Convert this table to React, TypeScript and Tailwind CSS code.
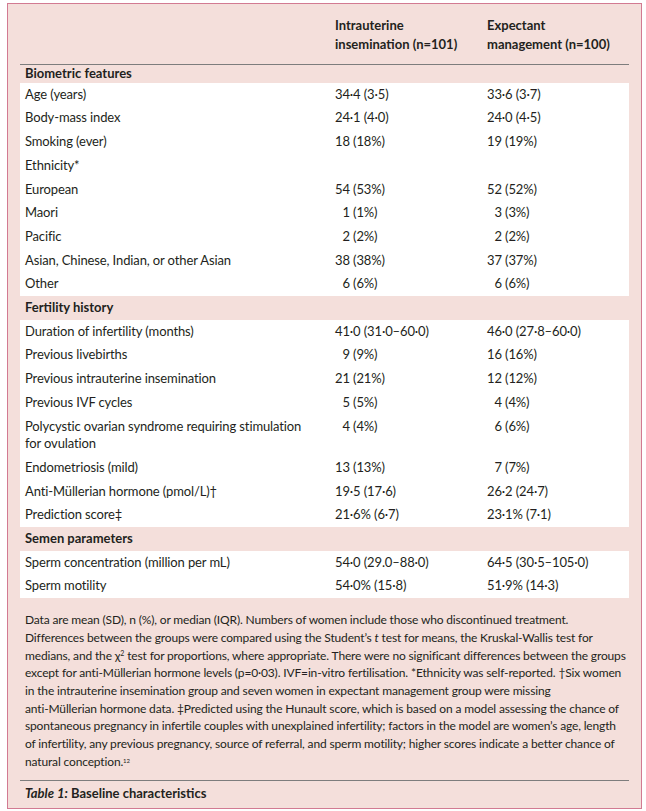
import React from "react";

const FS = "\u2007";

type R = [React.ReactNode, string, string];

const bio: R[] = [
  ["Age (years)", "34·4 (3·5)", "33·6 (3·7)"],
  ["Body-mass index", "24·1 (4·0)", "24·0 (4·5)"],
  ["Smoking (ever)", "18 (18%)", "19 (19%)"],
  ["Ethnicity*", "", ""],
  ["European", "54 (53%)", "52 (52%)"],
  ["Maori", FS + "1 (1%)", FS + "3 (3%)"],
  ["Pacific", FS + "2 (2%)", FS + "2 (2%)"],
  ["Asian, Chinese, Indian, or other Asian", "38 (38%)", "37 (37%)"],
  ["Other", FS + "6 (6%)", FS + "6 (6%)"],
];

const fert: R[] = [
  ["Duration of infertility (months)", "41·0 (31·0–60·0)", "46·0 (27·8–60·0)"],
  ["Previous livebirths", FS + "9 (9%)", "16 (16%)"],
  ["Previous intrauterine insemination", "21 (21%)", "12 (12%)"],
  ["Previous IVF cycles", FS + "5 (5%)", FS + "4 (4%)"],
  [
    <>
      Polycystic ovarian syndrome requiring stimulation
      <br />
      for ovulation
    </>,
    FS + "4 (4%)",
    FS + "6 (6%)",
  ],
  ["Endometriosis (mild)", "13 (13%)", FS + "7 (7%)"],
  ["Anti-Müllerian hormone (pmol/L)†", "19·5 (17·6)", "26·2 (24·7)"],
  ["Prediction score‡", "21·6% (6·7)", "23·1% (7·1)"],
];

const semen: R[] = [
  ["Sperm concentration (million per mL)", "54·0 (29.0–88·0)", "64·5 (30·5–105·0)"],
  ["Sperm motility", "54·0% (15·8)", "51·9% (14·3)"],
];

function Rows({ rows }: { rows: R[] }) {
  return (
    <div className="bg-white">
      {rows.map((r, i) => (
        <div
          key={i}
          className="grid grid-cols-[310px_152px_1fr] pl-[5px] py-[3px] leading-[17.7px]"
        >
          <div className="whitespace-nowrap">{r[0]}</div>
          <div className="whitespace-pre">{r[1]}</div>
          <div className="whitespace-pre">{r[2]}</div>
        </div>
      ))}
    </div>
  );
}

function Heading({ children, first }: { children: React.ReactNode; first?: boolean }) {
  return (
    <div
      className={
        "pl-[5px] font-bold tracking-normal leading-[17.7px] " +
        (first ? "pt-[0px] pb-[0px]" : "py-[3px]")
      }
    >
      {children}
    </div>
  );
}

export default function App() {
  return (
    <div className="w-[646px] h-[811px] bg-white pt-[3px] pl-[7px]">
      <div
        className="w-[635px] h-[806px] border border-[#d27a92] bg-[#f4dfdb] px-[12px] text-[13px] tracking-[-0.12px] text-[#231f20]"
        style={{ fontFamily: "Lato, 'Noto Sans', sans-serif" }}
      >
        <div className="grid grid-cols-[315px_152px_1fr] pt-[12px] pb-[10px] font-bold tracking-normal leading-[19px] border-b border-[#7d7d7d]">
          <div />
          <div>
            Intrauterine
            <br />
            insemination (n=101)
          </div>
          <div>
            Expectant
            <br />
            management (n=100)
          </div>
        </div>
        <Heading first>Biometric features</Heading>
        <Rows rows={bio} />
        <Heading>Fertility history</Heading>
        <Rows rows={fert} />
        <Heading>Semen parameters</Heading>
        <Rows rows={semen} />
        <div className="pl-[5px] pt-[13px] pb-[9px] text-[12px] tracking-[-0.15px] leading-[17.7px] whitespace-nowrap border-b border-[#7d7d7d]">
          <div>Data are mean (SD), n (%), or median (IQR). Numbers of women include those who discontinued treatment.</div>
          <div>
            Differences between the groups were compared using the Student’s <i>t</i> test for means, the Kruskal-Wallis test for
          </div>
          <div>
            medians, and the χ<sup className="text-[7px]">2</sup> test for proportions, where appropriate. There were no significant differences between the groups
          </div>
          <div>
            except for anti-Müllerian hormone levels (p=0·03). IVF=in-vitro fertilisation. *Ethnicity was self-reported. †Six women
          </div>
          <div>in the intrauterine insemination group and seven women in expectant management group were missing</div>
          <div>
            anti-Müllerian hormone data. ‡Predicted using the Hunault score, which is based on a model assessing the chance of
          </div>
          <div>
            spontaneous pregnancy in infertile couples with unexplained infertility; factors in the model are women’s age, length
          </div>
          <div>
            of infertility, any previous pregnancy, source of referral, and sperm motility; higher scores indicate a better chance of
          </div>
          <div>
            natural conception.<sup className="text-[6px]">12</sup>
          </div>
        </div>
        <div className="pl-[5px] pt-[4px] leading-[17.7px] font-bold tracking-normal">
          <i>Table 1:</i> Baseline characteristics
        </div>
      </div>
    </div>
  );
}
